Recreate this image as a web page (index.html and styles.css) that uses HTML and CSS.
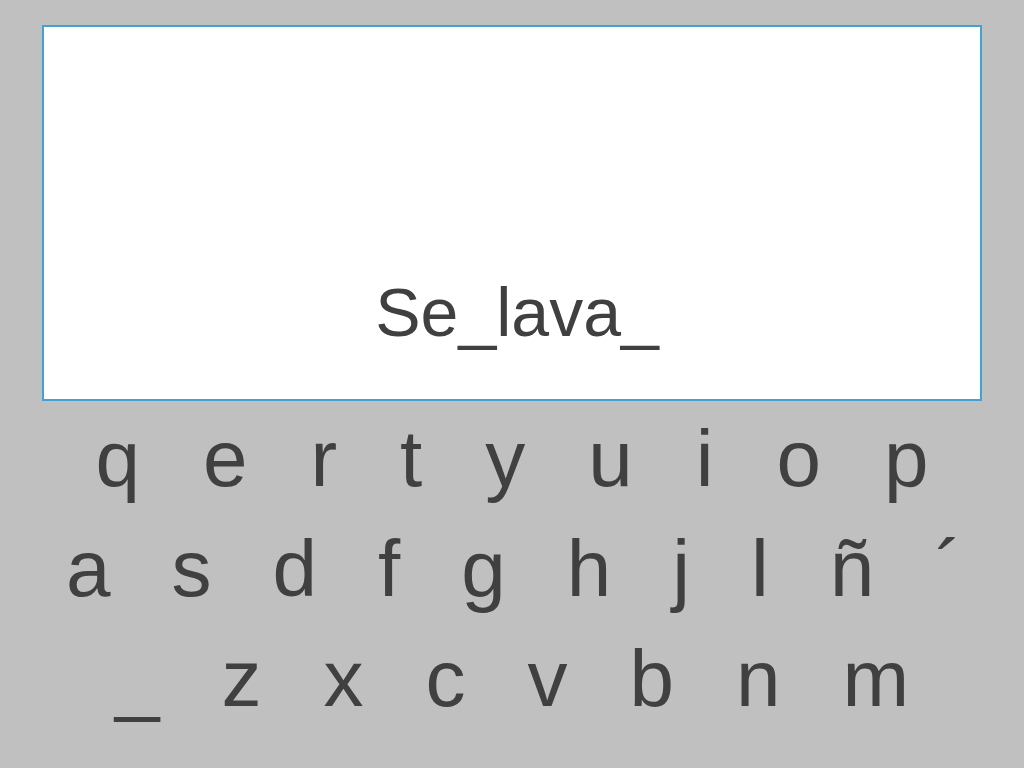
FILE: index.html
```html
<!DOCTYPE html>
<html lang="es">
<head>
  <meta charset="UTF-8">
  <title>Teclado - Se lava</title>
  <link rel="stylesheet" href="styles.css">
</head>
<body>
  <div class="pantalla">
    <p class="frase">Se_lava_</p>
  </div>

  <!-- teclado en pantalla -->
  <div class="teclado">
    <div class="fila fila-1">
      <span>q</span><span>e</span><span>r</span><span>t</span><span>y</span><span>u</span><span>i</span><span>o</span><span>p</span>
    </div>
    <div class="fila fila-2">
      <span>a</span><span>s</span><span>d</span><span>f</span><span>g</span><span>h</span><span>j</span><span>l</span><span>ñ</span><span>´</span>
    </div>
    <div class="fila">
      <span>_</span><span>z</span><span>x</span><span>c</span><span>v</span><span>b</span><span>n</span><span>m</span>
    </div>
  </div>
</body>
</html>
```

FILE: styles.css
```css
body {
  margin: 0;
  background: #c0c0c0;
  font-family: 'Liberation Sans', Arial, sans-serif;
  color: #404040;
}

.pantalla {
  margin: 25px 42px 0;
  height: 376px;
  box-sizing: border-box;
  border: 2px solid #42a2d4;
  background: #fff;
  display: flex;
  flex-direction: column;
  justify-content: flex-end;
  align-items: center;
  padding: 0 0 47px 10px;
}

.frase {
  margin: 0;
  font-size: 68px;
  line-height: 80px;
}

.teclado {
  margin-top: 3px;
}

.fila {
  display: flex;
  justify-content: center;
  gap: 62px;
  font-size: 80px;
  line-height: 110px;
}

.fila-1 {
  gap: 63px;
}

.fila-2 {
  gap: 61px;
  padding-left: 4px;
}
```
